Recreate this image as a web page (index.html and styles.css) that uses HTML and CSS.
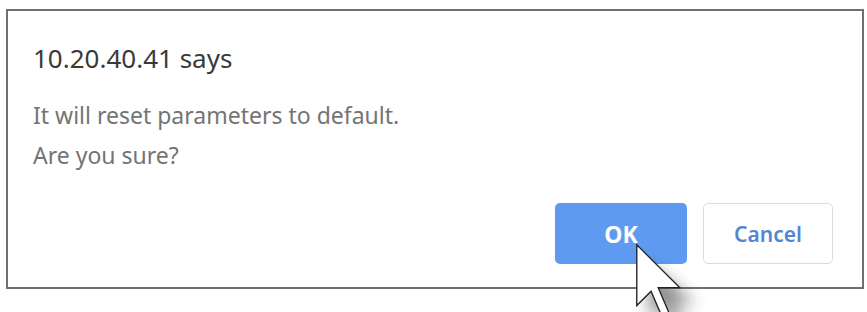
FILE: index.html
```html
<!DOCTYPE html>
<html>
<head>
<meta charset="utf-8">
<link rel="stylesheet" href="styles.css">
</head>
<body>
<div class="dialog">
  <div class="title">10.20.40.41 says</div>
  <div class="message">
    <div>It will reset parameters to default.</div>
    <div>Are you sure?</div>
  </div>
  <div class="actions">
    <button class="btn btn-ok">OK</button>
    <button class="btn btn-cancel">Cancel</button>
  </div>
</div>
<div class="cursor">
  <svg width="100" height="69" viewBox="0 0 28 19.32">
    <defs>
      <filter id="blur" x="-50%" y="-50%" width="200%" height="200%">
        <feGaussianBlur stdDeviation="2.2"/>
      </filter>
    </defs>
    <path d="M4 6 L4 21 L8 18 L11 25 L14 24 L11 17 L17 17 Z" fill="#333" opacity="0.55" filter="url(#blur)"/>
    <path d="M0.5 0.5 L0.5 17.5 L4.5 13.5 L7.5 20.5 L9.5 19.5 L6.5 12.5 L12.5 12.5 Z" fill="#fff" stroke="#222" stroke-width="0.38" stroke-linejoin="miter"/>
  </svg>
</div>
</body>
</html>
```

FILE: styles.css
```css
html, body {
  margin: 0;
  padding: 0;
  background: #fff;
}
body {
  width: 867px;
  height: 312px;
  overflow: hidden;
  position: relative;
  font-family: "Noto Sans", "Open Sans", sans-serif;
}
.dialog {
  box-sizing: border-box;
  margin: 9px 0 0 6px;
  width: 858px;
  height: 280px;
  border: 2px solid #707070;
  background: #fff;
  padding: 31px 29px 0 25px;
  display: flex;
  flex-direction: column;
}
.title {
  font-size: 26px;
  line-height: 32px;
  color: #3a3a3a;
}
.message {
  margin-top: 21px;
  font-size: 23px;
  line-height: 40px;
  color: #747474;
}
.actions {
  margin-top: auto;
  margin-bottom: 23px;
  display: flex;
  justify-content: flex-end;
  gap: 16px;
}
.btn {
  font-family: "Noto Sans", "Open Sans", sans-serif;
  height: 61px;
  border-radius: 5px;
  cursor: default;
}
.btn-ok {
  width: 132px;
  background: #5e9bf0;
  border: none;
  color: #fff;
  font-size: 23px;
  font-weight: 700;
}
.btn-cancel {
  width: 130px;
  background: #fff;
  border: 1px solid #dcdcdc;
  color: #5585d2;
  font-size: 21px;
  font-weight: 600;
}
.cursor {
  position: absolute;
  left: 635px;
  top: 243px;
  line-height: 0;
}
.cursor svg {
  display: block;
  overflow: hidden;
}
```
